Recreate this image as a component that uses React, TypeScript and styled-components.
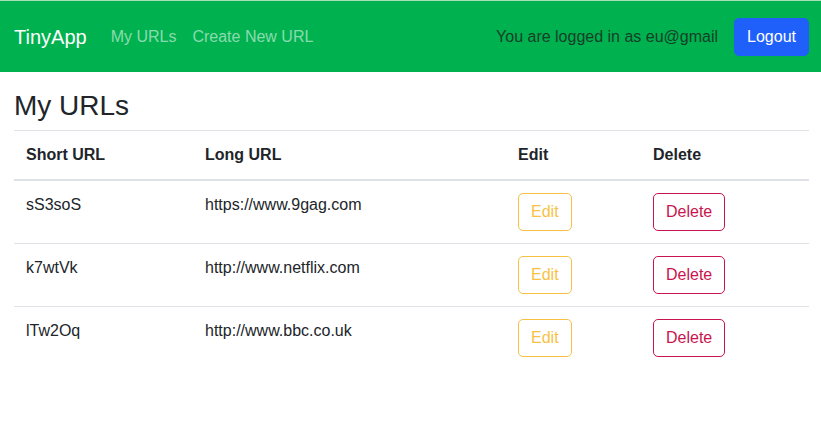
import React from "react";
import styled, { createGlobalStyle } from "styled-components";

const GlobalStyle = createGlobalStyle`
  body {
    margin: 0;
    background: #ffffff;
    color: #212529;
    font-family: "Liberation Sans", Arial, sans-serif;
    font-size: 16px;
    line-height: 1.5;
  }
`;

const Navbar = styled.nav`
  display: flex;
  align-items: center;
  height: 71px;
  padding: 0 12px 0 14px;
  background: #00b14f;
  border-top: 1px solid #a6dfb8;
`;

const Brand = styled.a`
  font-size: 20px;
  color: #ffffff;
  margin-right: 16px;
  text-decoration: none;
`;

const NavLink = styled.a`
  color: rgba(255, 255, 255, 0.55);
  padding: 8px;
  text-decoration: none;
`;

const NavRight = styled.div`
  margin-left: auto;
  display: flex;
  align-items: center;
  gap: 16px;
`;

const LoggedIn = styled.span`
  color: #163f27;
`;

const LogoutButton = styled.button`
  font-family: inherit;
  font-size: 16px;
  line-height: 24px;
  padding: 6px 12px;
  color: #ffffff;
  background: #1f5ffa;
  border: 1px solid #1f5ffa;
  border-radius: 5px;
`;

const Main = styled.main`
  padding: 0 12px 0 14px;
`;

const Heading = styled.h3`
  font-size: 28px;
  font-weight: 400;
  line-height: 1.2;
  margin: 17px 0 7px;
`;

const Table = styled.table`
  width: 100%;
  border-collapse: collapse;
`;

const Th = styled.th<{ $w: number }>`
  box-sizing: border-box;
  width: ${(p) => p.$w}px;
  text-align: left;
  padding: 12px;
  border-top: 1px solid #dee2e6;
  border-bottom: 2px solid #dee2e6;
  vertical-align: bottom;
`;

const Td = styled.td`
  padding: 12px;
  vertical-align: top;
  border-top: 1px solid #dee2e6;
`;

const FirstRow = styled.tr`
  & > td {
    border-top: none;
  }
`;

const OutlineButton = styled.button<{ $color: string }>`
  font-family: inherit;
  font-size: 16px;
  line-height: 24px;
  padding: 6px 12px;
  background: transparent;
  color: ${(p) => p.$color};
  border: 1px solid ${(p) => p.$color};
  border-radius: 5px;
`;

const urls = [
  { short: "sS3soS", long: "https://www.9gag.com" },
  { short: "k7wtVk", long: "http://www.netflix.com" },
  { short: "lTw2Oq", long: "http://www.bbc.co.uk" },
];

const UrlRow: React.FC<{ short: string; long: string; first: boolean }> = ({
  short,
  long,
  first,
}) => {
  const cells = (
    <>
      <Td>{short}</Td>
      <Td>{long}</Td>
      <Td>
        <OutlineButton $color="#f7c244">Edit</OutlineButton>
      </Td>
      <Td>
        <OutlineButton $color="#c8154f">Delete</OutlineButton>
      </Td>
    </>
  );
  return first ? <FirstRow>{cells}</FirstRow> : <tr>{cells}</tr>;
};

const App: React.FC = () => {
  return (
    <>
      <GlobalStyle />
      <Navbar>
        <Brand>TinyApp</Brand>
        <NavLink>My URLs</NavLink>
        <NavLink>Create New URL</NavLink>
        <NavRight>
          <LoggedIn>You are logged in as eu@gmail</LoggedIn>
          <LogoutButton>Logout</LogoutButton>
        </NavRight>
      </Navbar>
      <Main>
        <Heading>My URLs</Heading>
        <Table>
          <thead>
            <tr>
              <Th $w={179}>Short URL</Th>
              <Th $w={313}>Long URL</Th>
              <Th $w={135}>Edit</Th>
              <Th $w={168}>Delete</Th>
            </tr>
          </thead>
          <tbody>
            {urls.map((u, i) => (
              <UrlRow key={u.short} short={u.short} long={u.long} first={i === 0} />
            ))}
          </tbody>
        </Table>
      </Main>
    </>
  );
};

export default App;
